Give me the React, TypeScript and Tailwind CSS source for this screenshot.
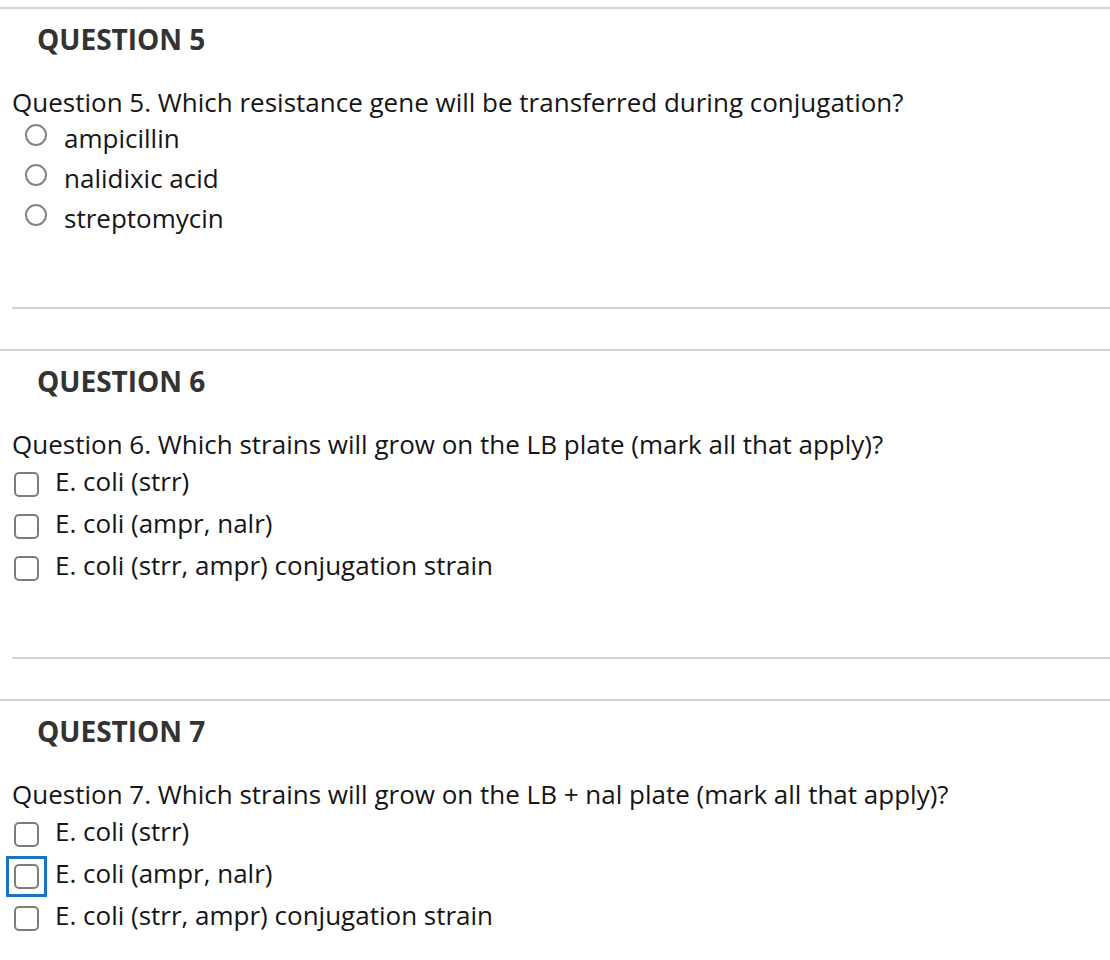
import React from "react";

/* quiz data */
type Question = {
  n: number;
  text: string;
  kind: "radio" | "checkbox";
  options: string[];
  focused?: number;
};

const questions: Question[] = [
  {
    n: 5,
    text: "Question 5. Which resistance gene will be transferred during conjugation?",
    kind: "radio",
    options: ["ampicillin", "nalidixic acid", "streptomycin"],
  },
  {
    n: 6,
    text: "Question 6. Which strains will grow on the LB plate (mark all that apply)?",
    kind: "checkbox",
    options: ["E. coli (strr)", "E. coli (ampr, nalr)", "E. coli (strr, ampr) conjugation strain"],
  },
  {
    n: 7,
    text: "Question 7. Which strains will grow on the LB + nal plate (mark all that apply)?",
    kind: "checkbox",
    options: ["E. coli (strr)", "E. coli (ampr, nalr)", "E. coli (strr, ampr) conjugation strain"],
    focused: 1,
  },
];

function RadioRow({ label }: { label: string }) {
  return (
    <div className="flex items-start h-[40px]">
      <span className="ml-[25px] mt-[6px] w-[22px] h-[22px] rounded-full border-2 border-[#858585] bg-white shrink-0" />
      <span className="ml-[17px] leading-[40px]">{label}</span>
    </div>
  );
}

function CheckRow({ label, focused }: { label: string; focused?: boolean }) {
  return (
    <div className="flex items-start h-[42px]">
      <span className="relative ml-[14px] mt-[12px] w-[25px] h-[25px] rounded-[5px] border-2 border-[#7d7d7d] bg-white shrink-0">
        {/* keyboard focus ring */}
        {focused && <span className="absolute -inset-[10px] border-[3px] border-[#1b73c6]" />}
      </span>
      <span className="ml-[16px] leading-[42px]">{label}</span>
    </div>
  );
}

function QuestionBlock({ q }: { q: Question }) {
  return (
    <section className="border-t-2 border-[#d3d3d3] mb-[40px]">
      <h2 className="mt-[11px] pl-[37px] text-[28px] leading-[38px] font-bold text-[#333333]">
        QUESTION {q.n}
      </h2>

      <p className="mt-[29px] pl-[12px] text-[26px] leading-[30px] text-[#151515]">{q.text}</p>

      {q.kind === "radio" ? (
        <div className="mt-[1px] text-[26px] text-[#151515]">
          {q.options.map((o) => (
            <RadioRow key={o} label={o} />
          ))}
        </div>
      ) : (
        <div className="mt-[1px] text-[26px] text-[#151515]">
          {q.options.map((o, i) => (
            <CheckRow key={o} label={o} focused={q.focused === i} />
          ))}
        </div>
      )}

      {/* inner divider */}
      <div
        className={
          "ml-[12px] border-t-2 border-[#d3d3d3] " + (q.kind === "radio" ? "mt-[69px]" : "mt-[71px]")
        }
      />
    </section>
  );
}

export default function App() {
  return (
    <div className="w-[1110px] h-[960px] bg-white overflow-hidden pt-[7px]" style={{ fontFamily: '"Open Sans", sans-serif' }}>
      {questions.map((q) => (
        <QuestionBlock key={q.n} q={q} />
      ))}
    </div>
  );
}
